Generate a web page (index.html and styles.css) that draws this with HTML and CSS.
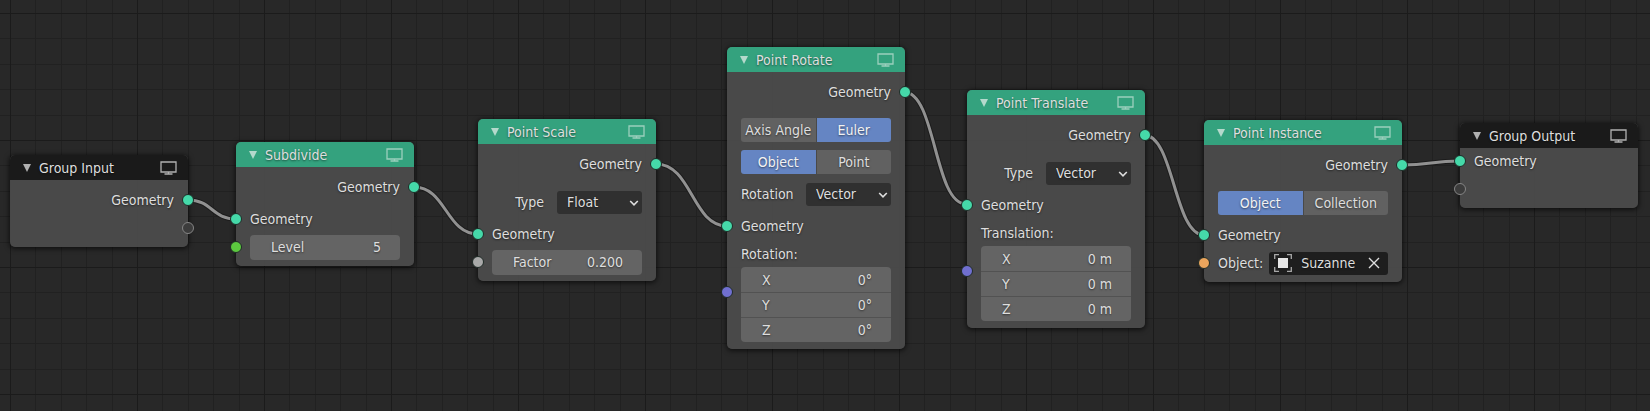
FILE: index.html
```html
<!DOCTYPE html>
<html lang="en">
<head>
  <meta charset="UTF-8" />
  <meta name="viewport" content="width=device-width, initial-scale=1.0"/>
  <title>Geometry Nodes</title>
  <link rel="stylesheet" href="styles.css">
</head>
<body>
  <!-- shared icons -->
  <svg class="icon-defs" aria-hidden="true">
    <symbol id="icon-triangle" viewBox="0 0 8 8"><path d="M0 0h8L4 8z" fill="currentColor"/></symbol>
    <symbol id="icon-screen" viewBox="0 0 17 14">
      <path d="M1 1h15v10H1zM8.500 11v2M4.500 13h8" fill="none" stroke="currentColor" stroke-width="1.300"/>
    </symbol>
    <symbol id="icon-chevron" viewBox="0 0 10 6">
      <path d="M1.200 1l3.800 3.800L8.800 1" fill="none" stroke="currentColor" stroke-width="1.600"/>
    </symbol>
    <symbol id="icon-object" viewBox="0 0 18 18">
      <path d="M.7 5V.7H5M13 .7h4.300V5M17.300 13v4.300H13M5 17.300H.7V13" fill="none" stroke="#a8a8a8" stroke-width="1.300"/>
      <path d="M4 4h10v10H4z" fill="#e6e6e6"/>
    </symbol>
    <symbol id="icon-close" viewBox="0 0 12 12">
      <path d="M1 1l10 10M11 1L1 11" fill="none" stroke="currentColor" stroke-width="1.400"/>
    </symbol>
  </svg>

  <main class="canvas">
    <svg class="links" aria-hidden="true">
      <g class="link-outline">
        <path d="M188 200C212 200 212 219 236 219"/>
        <path d="M414 187C446 187 446 234 478 234"/>
        <path d="M656 164C692 164 692 226 727 226"/>
        <path d="M904 92C936 92 934 204 966 204"/>
        <path d="M1144 135C1174 135 1174 235 1204 235"/>
        <path d="M1402 165C1431 165 1431 161 1460 161"/>
      </g>
      <g class="link-line">
        <path d="M188 200C212 200 212 219 236 219"/>
        <path d="M414 187C446 187 446 234 478 234"/>
        <path d="M656 164C692 164 692 226 727 226"/>
        <path d="M904 92C936 92 934 204 966 204"/>
        <path d="M1144 135C1174 135 1174 235 1204 235"/>
        <path d="M1402 165C1431 165 1431 161 1460 161"/>
      </g>
    </svg>

    <section class="node group-node" id="groupInput">
      <header>
        <button class="collapse" aria-label="Collapse"><svg><use href="#icon-triangle"/></svg></button>
        <h2>Group Input</h2>
        <svg class="screen"><use href="#icon-screen"/></svg>
      </header>
      <div class="node-body">
        <div class="row output">Geometry<i class="socket geometry"></i></div>
        <div class="row output"><i class="socket empty"></i></div>
      </div>
    </section>

    <section class="node" id="subdivide">
      <header>
        <button class="collapse" aria-label="Collapse"><svg><use href="#icon-triangle"/></svg></button>
        <h2>Subdivide</h2>
        <svg class="screen"><use href="#icon-screen"/></svg>
      </header>
      <div class="node-body">
        <div class="row output">Geometry<i class="socket geometry"></i></div>
        <div class="row input spaced"><i class="socket geometry"></i>Geometry</div>
        <div class="row input"><i class="socket integer"></i>
          <div class="field"><label for="level">Level</label><input id="level" type="text" value="5"></div>
        </div>
      </div>
    </section>

    <section class="node" id="pointScale">
      <header>
        <button class="collapse" aria-label="Collapse"><svg><use href="#icon-triangle"/></svg></button>
        <h2>Point Scale</h2>
        <svg class="screen"><use href="#icon-screen"/></svg>
      </header>
      <div class="node-body">
        <div class="row output">Geometry<i class="socket geometry"></i></div>
        <div class="settings">
          <div class="row setting">
            <label class="right" for="scaleType">Type</label>
            <div class="dropdown"><select id="scaleType"><option>Float</option><option>Vector</option></select><svg><use href="#icon-chevron"/></svg></div>
          </div>
        </div>
        <div class="row input"><i class="socket geometry"></i>Geometry</div>
        <div class="row input"><i class="socket float"></i>
          <div class="field"><label for="factor">Factor</label><input id="factor" type="text" value="0.200"></div>
        </div>
      </div>
    </section>

    <section class="node" id="pointRotate">
      <header>
        <button class="collapse" aria-label="Collapse"><svg><use href="#icon-triangle"/></svg></button>
        <h2>Point Rotate</h2>
        <svg class="screen"><use href="#icon-screen"/></svg>
      </header>
      <div class="node-body">
        <div class="row output">Geometry<i class="socket geometry"></i></div>
        <div class="settings">
          <div class="row toggle"><button>Axis Angle</button><button class="active">Euler</button></div>
          <div class="row toggle"><button class="active">Object</button><button>Point</button></div>
          <div class="row setting">
            <label for="rotationType">Rotation</label>
            <div class="dropdown"><select id="rotationType"><option>Vector</option><option>Float</option></select><svg><use href="#icon-chevron"/></svg></div>
          </div>
        </div>
        <div class="row input"><i class="socket geometry"></i>Geometry</div>
        <div class="row input">Rotation:</div>
        <div class="vector"><i class="socket vec"></i>
          <div class="field"><label for="rotX">X</label><input id="rotX" type="text" value="0°"></div>
          <div class="field"><label for="rotY">Y</label><input id="rotY" type="text" value="0°"></div>
          <div class="field"><label for="rotZ">Z</label><input id="rotZ" type="text" value="0°"></div>
        </div>
      </div>
    </section>

    <section class="node" id="pointTranslate">
      <header>
        <button class="collapse" aria-label="Collapse"><svg><use href="#icon-triangle"/></svg></button>
        <h2>Point Translate</h2>
        <svg class="screen"><use href="#icon-screen"/></svg>
      </header>
      <div class="node-body">
        <div class="row output">Geometry<i class="socket geometry"></i></div>
        <div class="settings">
          <div class="row setting">
            <label class="right" for="translateType">Type</label>
            <div class="dropdown"><select id="translateType"><option>Vector</option><option>Float</option></select><svg><use href="#icon-chevron"/></svg></div>
          </div>
        </div>
        <div class="row input"><i class="socket geometry"></i>Geometry</div>
        <div class="row input">Translation:</div>
        <div class="vector"><i class="socket vec"></i>
          <div class="field"><label for="locX">X</label><input id="locX" type="text" value="0 m"></div>
          <div class="field"><label for="locY">Y</label><input id="locY" type="text" value="0 m"></div>
          <div class="field"><label for="locZ">Z</label><input id="locZ" type="text" value="0 m"></div>
        </div>
      </div>
    </section>

    <section class="node" id="pointInstance">
      <header>
        <button class="collapse" aria-label="Collapse"><svg><use href="#icon-triangle"/></svg></button>
        <h2>Point Instance</h2>
        <svg class="screen"><use href="#icon-screen"/></svg>
      </header>
      <div class="node-body">
        <div class="row output">Geometry<i class="socket geometry"></i></div>
        <div class="settings">
          <div class="row toggle"><button class="active">Object</button><button>Collection</button></div>
        </div>
        <div class="row input"><i class="socket geometry"></i>Geometry</div>
        <div class="row input"><i class="socket object"></i>
          <label for="object">Object:</label>
          <div class="object-picker">
            <svg class="object-icon"><use href="#icon-object"/></svg>
            <input id="object" type="text" value="Suzanne">
            <button aria-label="Clear"><svg><use href="#icon-close"/></svg></button>
          </div>
        </div>
      </div>
    </section>

    <section class="node group-node" id="groupOutput">
      <header>
        <button class="collapse" aria-label="Collapse"><svg><use href="#icon-triangle"/></svg></button>
        <h2>Group Output</h2>
        <svg class="screen"><use href="#icon-screen"/></svg>
      </header>
      <div class="node-body">
        <div class="row input"><i class="socket geometry"></i>Geometry</div>
        <div class="row input"><i class="socket empty"></i></div>
      </div>
    </section>
  </main>
</body>
</html>
```
FILE: styles.css
```css
* {
  box-sizing: border-box;
}

body {
  margin: 0;
  background-color: #282828;
  color: #dedede;
  font-family: "DejaVu Sans Condensed", "Noto Sans", sans-serif;
  font-size: 14px;
  line-height: 20px;
}

button, input, select {
  font: inherit;
  color: inherit;
  text-shadow: inherit;
  border: none;
  margin: 0;
  padding: 0;
  background: none;
}

.icon-defs {
  position: absolute;
  width: 0;
  height: 0;
}

/* background grid: a darker line every fifth cell */
.canvas {
  --major: #1b1b1b;
  --minor: #212121;
  position: relative;
  min-height: 100vh;
  overflow: hidden;
  background-image:
    linear-gradient(90deg, var(--major) 1px, transparent 1px),
    linear-gradient(var(--major) 1px, transparent 1px),
    linear-gradient(90deg, transparent 25px, var(--minor) 25px 26px, transparent 26px 51px, var(--minor) 51px 52px, transparent 52px 76px, var(--minor) 76px 77px, transparent 77px 102px, var(--minor) 102px 103px, transparent 103px),
    linear-gradient(transparent 25px, var(--minor) 25px 26px, transparent 26px 51px, var(--minor) 51px 52px, transparent 52px 76px, var(--minor) 76px 77px, transparent 77px 102px, var(--minor) 102px 103px, transparent 103px);
  background-size: 127px 127px;
  background-position: 10px 13px;
}

.links {
  position: absolute;
  inset: 0;
  width: 100%;
  height: 100%;
  fill: none;
}

.link-outline {
  stroke: #1c1c1c;
  stroke-width: 5;
}

.link-line {
  stroke: #919191;
  stroke-width: 3;
}

/* nodes */
.node {
  position: absolute;
  width: 178px;
  border-radius: 5px;
  background-color: rgba(75, 75, 75, 0.94);
  box-shadow: 0 1px 5px 1px rgba(0, 0, 0, 0.6);
  text-shadow: 0 1px 2px rgba(0, 0, 0, 0.5);
}

#groupInput { left: 10px; top: 155px; }
#subdivide { left: 236px; top: 142px; }
#pointScale { left: 478px; top: 119px; }
#pointRotate { left: 727px; top: 47px; }
#pointTranslate { left: 967px; top: 90px; }
#pointInstance { left: 1204px; top: 120px; width: 198px; }
#groupOutput { left: 1460px; top: 123px; }

.node header {
  display: flex;
  align-items: center;
  height: 25px;
  padding: 0 11px 0 13px;
  border-radius: 5px 5px 0 0;
  background-color: #34a27e;
}

.group-node header {
  background-color: #1a1a1a;
}

.node h2 {
  flex: 1;
  margin: 0;
  font-size: 14px;
  font-weight: normal;
}

.collapse {
  display: flex;
  width: 16px;
  color: #b4d9cc;
}

.collapse svg {
  width: 8px;
  height: 8px;
}

.screen {
  width: 17px;
  height: 14px;
  color: #9bcfbd;
}

.group-node .collapse,
.group-node .screen {
  color: #b0b0b0;
}

.node-body {
  display: grid;
  grid-template-columns: minmax(0, 1fr);
  gap: 4px;
  padding: 8px 14px 7px;
}

#groupOutput .node-body {
  padding-top: 1px;
}

.row {
  position: relative;
  display: flex;
  align-items: center;
  height: 24px;
}

.output {
  justify-content: flex-end;
}

.spaced {
  margin-top: 4px;
}

/* sockets sit on the node's edge */
.socket {
  position: absolute;
  top: 50%;
  width: 12px;
  height: 12px;
  margin-top: -6px;
  border: 1px solid #1f2b27;
  border-radius: 50%;
}

.output .socket { right: -20px; }
.input .socket,
.vector .socket { left: -20px; }
.vector .socket { top: 25px; }

.geometry { background-color: #45d9a9; }
.integer { background-color: #5cc93f; }
.float { background-color: #a9a9a9; }
.vec { background-color: #706fd0; }
.object { background-color: #eba55c; }
.empty {
  background-color: #3c3c3c;
  border-color: #858585;
}

/* controls */
.settings {
  display: grid;
  grid-template-columns: minmax(0, 1fr);
  gap: 8px;
  padding: 10px 0 4px;
}

.setting {
  justify-content: space-between;
}

.setting .right {
  flex: 1;
  padding-right: 13px;
  text-align: right;
}

.dropdown {
  position: relative;
  width: 85px;
}

.dropdown select {
  display: block;
  width: 100%;
  height: 23px;
  padding: 0 10px;
  border-radius: 3px;
  background-color: #303030;
  appearance: none;
}

.dropdown svg {
  position: absolute;
  right: 3px;
  top: 9px;
  width: 10px;
  height: 6px;
  pointer-events: none;
}

.toggle {
  gap: 1px;
}

.toggle button {
  flex: 1 1 0;
  min-width: 0;
  height: 24px;
  border-radius: 0 3px 3px 0;
  background-color: #616161;
  white-space: nowrap;
}

.toggle button:first-child {
  border-radius: 3px 0 0 3px;
}

.toggle .active {
  background-color: #6585c3;
  color: #f2f2f2;
}

.field {
  display: flex;
  align-items: center;
  flex: 1;
  min-width: 0;
  height: 25px;
  padding: 0 19px 0 21px;
  border-radius: 4px;
  background-color: #646464;
}

.field input {
  flex: 1;
  min-width: 0;
  text-align: right;
}

.vector {
  position: relative;
  margin-top: -3px;
}

.vector .field {
  border-radius: 0;
}

.vector .field + .field {
  border-top: 1px solid #525252;
}

.vector .socket + .field {
  border-radius: 4px 4px 0 0;
}

.vector .field:last-child {
  border-radius: 0 0 4px 4px;
}

.object-picker {
  display: flex;
  align-items: center;
  flex: 1;
  min-width: 0;
  height: 23px;
  margin-left: 6px;
  padding: 0 8px 0 5px;
  border-radius: 3px;
  background-color: #1e1e1e;
}

.object-icon {
  flex: none;
  width: 18px;
  height: 18px;
}

.object-picker input {
  flex: 1;
  min-width: 0;
  padding-left: 9px;
}

.object-picker button {
  display: flex;
}

.object-picker button svg {
  width: 12px;
  height: 12px;
}
```
